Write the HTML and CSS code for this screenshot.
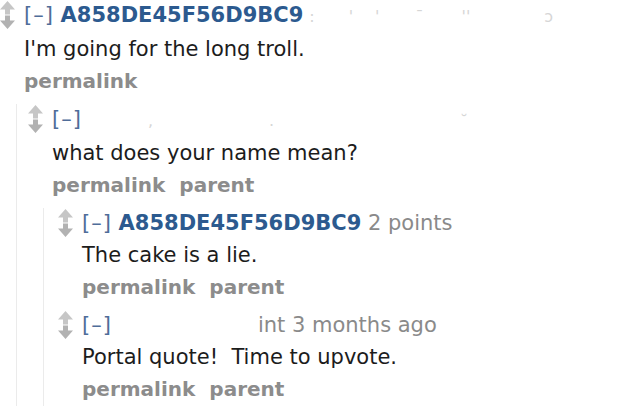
FILE: index.html
```html
<!DOCTYPE html>
<html>
<head>
<meta charset="utf-8">
<link rel="stylesheet" href="styles.css">
</head>
<body>
<div class="thread">
  <div class="comment">
    <div class="row">
      <div class="arrows"><svg width="15" height="28" viewBox="0 0 15 28"><path class="up" d="M7.5 0 L15 8.5 L10 8.5 L10 13.5 L5 13.5 L5 8.5 L0 8.5 Z"/><path class="down" d="M5 14.5 L10 14.5 L10 19.5 L15 19.5 L7.5 28 L0 19.5 L5 19.5 Z"/></svg></div>
      <div class="entry">
        <p class="tagline"><span class="expand">[–]</span> <span class="author">A858DE45F56D9BC9</span><span class="ghost g1">:</span><span class="ghost g2">'</span><span class="ghost g3">'</span><span class="ghost g4">ˉ</span><span class="ghost g5">''</span><span class="ghost g6">ɔ</span></p>
        <p class="body">I'm going for the long troll.</p>
        <p class="buttons"><span>permalink</span></p>
      </div>
    </div>
    <div class="children lvl1">
      <div class="comment">
        <div class="row">
          <div class="arrows"><svg width="15" height="28" viewBox="0 0 15 28"><path class="up" d="M7.5 0 L15 8.5 L10 8.5 L10 13.5 L5 13.5 L5 8.5 L0 8.5 Z"/><path class="down" d="M5 14.5 L10 14.5 L10 19.5 L15 19.5 L7.5 28 L0 19.5 L5 19.5 Z"/></svg></div>
          <div class="entry">
            <p class="tagline"><span class="expand">[–]</span><span class="ghost h1">,</span><span class="ghost h2">.</span><span class="ghost h3">˘</span></p>
            <p class="body">what does your name mean?</p>
            <p class="buttons"><span>permalink</span> <span>parent</span></p>
          </div>
        </div>
        <div class="children lvl2">
          <div class="comment">
            <div class="row">
              <div class="arrows"><svg width="15" height="28" viewBox="0 0 15 28"><path class="up" d="M7.5 0 L15 8.5 L10 8.5 L10 13.5 L5 13.5 L5 8.5 L0 8.5 Z"/><path class="down" d="M5 14.5 L10 14.5 L10 19.5 L15 19.5 L7.5 28 L0 19.5 L5 19.5 Z"/></svg></div>
              <div class="entry">
                <p class="tagline"><span class="expand">[–]</span> <span class="author">A858DE45F56D9BC9</span> <span class="score">2 points</span></p>
                <p class="body">The cake is a lie.</p>
                <p class="buttons"><span>permalink</span> <span>parent</span></p>
              </div>
            </div>
          </div>
          <div class="comment">
            <div class="row">
              <div class="arrows"><svg width="15" height="28" viewBox="0 0 15 28"><path class="up" d="M7.5 0 L15 8.5 L10 8.5 L10 13.5 L5 13.5 L5 8.5 L0 8.5 Z"/><path class="down" d="M5 14.5 L10 14.5 L10 19.5 L15 19.5 L7.5 28 L0 19.5 L5 19.5 Z"/></svg></div>
              <div class="entry">
                <p class="tagline"><span class="expand">[–]</span><span class="time">int 3 months ago</span></p>
                <p class="body">Portal quote!&nbsp; Time to upvote.</p>
                <p class="buttons"><span>permalink</span> <span>parent</span></p>
              </div>
            </div>
          </div>
        </div>
      </div>
    </div>
  </div>
</div>
</body>
</html>
```

FILE: styles.css
```css
html, body {
  margin: 0;
  padding: 0;
  background: #fff;
  overflow: hidden;
}
body {
  font-family: "DejaVu Sans", Verdana, sans-serif;
  color: #1c1c1c;
}
.comment {
  display: flex;
  flex-direction: column;
}
.row {
  display: flex;
  gap: 9px;
  margin-bottom: 8px;
}
.arrows {
  width: 15px;
  padding-top: 1px;
  flex: none;
}
.arrows svg {
  display: block;
}
.up { fill: #c6c6c6; }
.down { fill: #b2b2b2; }
.entry p {
  margin: 0;
  white-space: nowrap;
}
.tagline {
  font-size: 21px;
  line-height: 30px;
  color: #888;
}
.expand {
  color: #4f6d99;
  letter-spacing: 1px;
}
.author {
  color: #2c5a8f;
  font-weight: bold;
}
.ghost {
  display: inline-block;
  color: #d6d6d6;
  font-size: 16px;
}
.g1 { margin-left: 6px; }
.g2 { margin-left: 34px; }
.g3 { margin-left: 22px; }
.g4 { margin-left: 36px; }
.g5 { margin-left: 38px; }
.g6 { margin-left: 74px; }
.h1 { margin-left: 66px; }
.h2 { margin-left: 116px; }
.h3 { margin-left: 186px; }
.score, .time {
  color: #8a8a8a;
}
.time {
  margin-left: 146px;
}
.body {
  font-size: 21px;
  line-height: 34px;
  margin-top: 6px;
}
.buttons {
  font-size: 20px;
  font-weight: bold;
  line-height: 30px;
  color: #8c8c8c;
}
.buttons span + span {
  margin-left: 7px;
}
.children {
  border-left: 1px solid #ebebeb;
}
.lvl1 {
  margin-left: 16px;
  padding-left: 11px;
}
.lvl2 {
  margin-left: 15px;
  padding-left: 14px;
}
```
